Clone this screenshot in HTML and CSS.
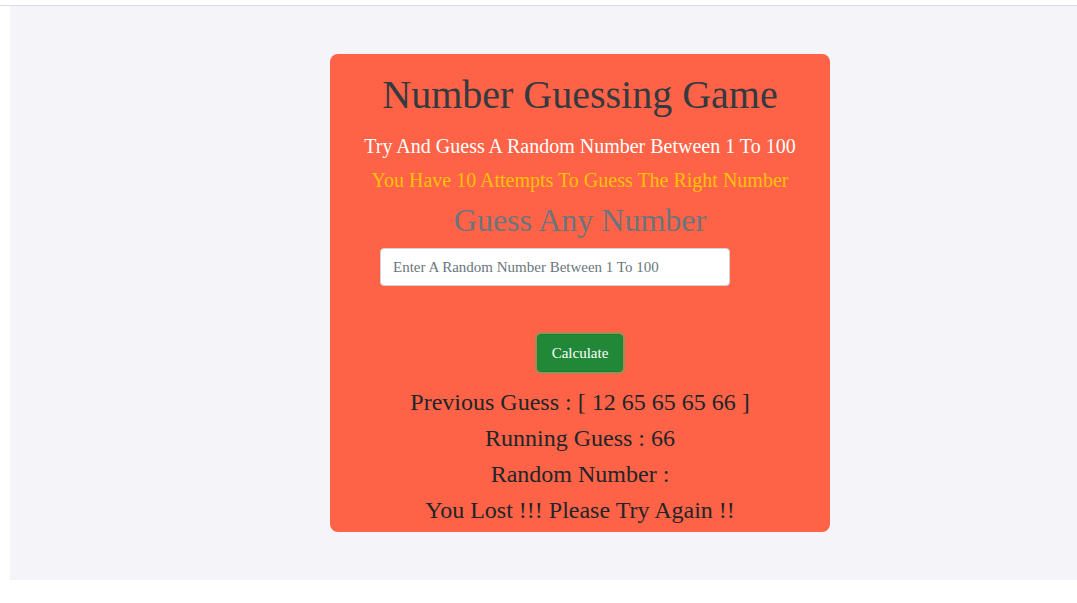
FILE: index.html
```html
<!DOCTYPE html>
<html>
<head>
<meta charset="utf-8">
<link rel="stylesheet" href="styles.css">
</head>
<body>
<div class="topbar"></div>
<main class="panel">
  <section class="card">
    <h1 class="title">Number Guessing Game</h1>
    <p class="sub">Try And Guess A Random Number Between 1 To 100</p>
    <p class="attempts">You Have 10 Attempts To Guess The Right Number</p>
    <h2 class="label">Guess Any Number</h2>
    <div class="inputrow">
      <input class="guess" type="text" placeholder="Enter A Random Number Between 1 To 100">
    </div>
    <div class="btnrow">
      <button class="btn">Calculate</button>
    </div>
    <div class="results">
      <p class="line">Previous Guess : [ 12 65 65 65 66 ]</p>
      <p class="line">Running Guess : 66</p>
      <p class="line">Random Number :</p>
      <p class="line">You Lost !!! Please Try Again !!</p>
    </div>
  </section>
</main>
</body>
</html>
```
FILE: styles.css
```css
html, body {
  margin: 0;
  padding: 0;
  background: #ffffff;
  font-family: "Liberation Serif", "Times New Roman", serif;
}
.topbar {
  height: 5px;
  border-bottom: 1px solid #dcdcdf;
}
.panel {
  margin-left: 10px;
  height: 574px;
  background: #f4f4f9;
  padding-top: 48px;
  box-sizing: border-box;
}
.card {
  width: 500px;
  margin-left: 320px;
  background: #ff6347;
  border-radius: 8px;
  box-sizing: border-box;
  height: 478px;
  text-align: center;
  padding-top: 13px;
}
.title {
  margin: 0;
  font-size: 40px;
  font-weight: normal;
  line-height: 56px;
  color: #343a40;
}
.sub {
  margin: 11px 0 0;
  font-size: 20px;
  line-height: 24px;
  color: #ffffff;
}
.attempts {
  margin: 10px 0 0;
  font-size: 20px;
  line-height: 24px;
  color: #ffc107;
}
.label {
  margin: 8px 0 0;
  font-size: 32px;
  font-weight: normal;
  line-height: 40px;
  color: #6c757d;
}
.inputrow {
  display: flex;
  padding-left: 50px;
  margin-top: 8px;
}
.guess {
  width: 350px;
  height: 38px;
  box-sizing: border-box;
  border: 1px solid #ced4da;
  border-radius: 4px;
  padding: 0 12px;
  font-family: "Liberation Serif", "Times New Roman", serif;
  font-size: 15px;
  color: #495057;
  background: #fff;
  outline: none;
}
.guess::placeholder {
  color: #6c757d;
}
.btnrow {
  display: flex;
  justify-content: center;
  margin-top: 48px;
}
.btn {
  height: 38px;
  width: 86px;
  background: #218838;
  color: #fff;
  border: 1px solid #1e7e34;
  border-radius: 4px;
  font-family: "Liberation Serif", "Times New Roman", serif;
  font-size: 15px;
  box-shadow: 0 0 0 2px rgba(72, 180, 97, 0.5);
  padding: 0;
}
.results {
  margin-top: 12px;
}
.line {
  margin: 0;
  font-size: 24px;
  line-height: 36px;
  color: #212529;
}
```
